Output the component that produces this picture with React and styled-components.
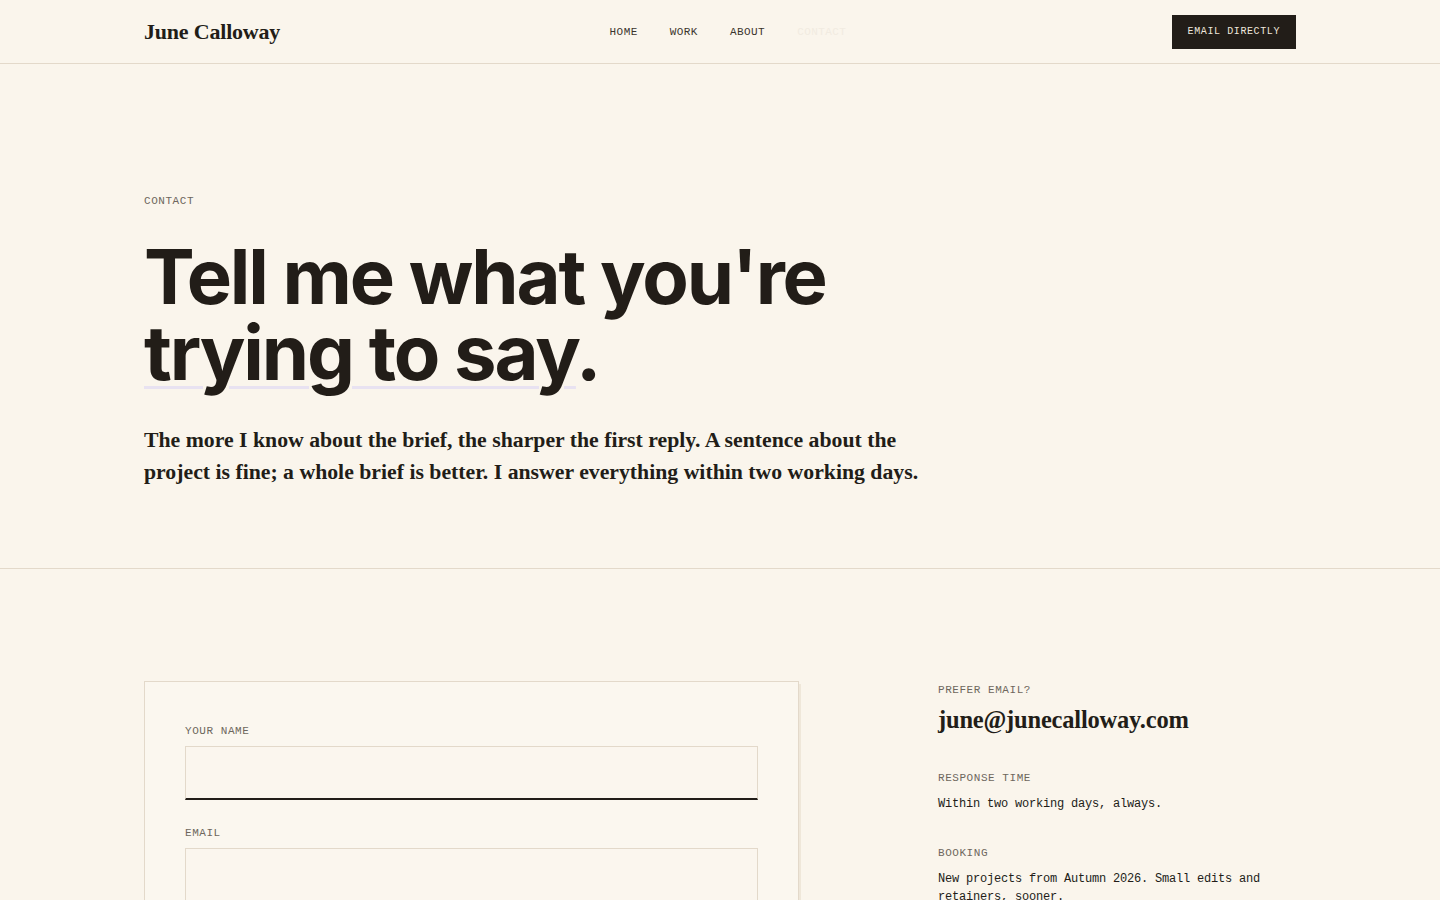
import React from "react";
import styled, { createGlobalStyle } from "styled-components";

const GlobalStyle = createGlobalStyle`
  * { box-sizing: border-box; }
  body {
    margin: 0;
    background: #faf5ec;
    color: #221d18;
    font-family: "Inter", "Noto Sans", sans-serif;
  }
`;

const mono = `"Liberation Mono", "DejaVu Sans Mono", monospace`;
const serif = `"Liberation Serif", "DejaVu Serif", serif`;

const Header = styled.header`
  height: 64px;
  border-bottom: 1px solid #e3d9ca;
`;

const Wrap = styled.div`
  width: 1152px;
  margin: 0 auto;
`;

const HeaderInner = styled(Wrap)`
  height: 100%;
  display: grid;
  grid-template-columns: 1fr auto 1fr;
  align-items: center;
`;

const Logo = styled.a`
  font-family: ${serif};
  font-weight: 700;
  font-size: 22px;
  letter-spacing: -0.2px;
  color: #221d18;
  text-decoration: none;
  padding-top: 1px;
`;

const Nav = styled.nav`
  display: flex;
  gap: 32px;
  margin-left: 16px;
`;

const NavLink = styled.a`
  font-family: ${mono};
  font-size: 11px;
  letter-spacing: 0.04em;
  text-transform: uppercase;
  color: ${(p) => (p.$active ? "#f1ebe1" : "#3a342d")};
  text-decoration: none;
`;

const HeaderCta = styled.a`
  justify-self: end;
  background: #221d18;
  color: #eee7dc;
  font-family: ${mono};
  font-size: 10px;
  letter-spacing: 0.06em;
  text-transform: uppercase;
  padding: 0 16px;
  height: 34px;
  display: flex;
  align-items: center;
  text-decoration: none;
`;

const Hero = styled.section`
  border-bottom: 1px solid #e3d9ca;
  padding: 131px 0 80px;
`;

const Eyebrow = styled.div`
  font-family: ${mono};
  font-size: 11px;
  letter-spacing: 0.05em;
  text-transform: uppercase;
  color: #6e675d;
`;

const Headline = styled.h1`
  margin: 31px 0 0;
  font-family: "Inter", "Noto Sans", sans-serif;
  font-weight: 700;
  font-size: 76px;
  line-height: 76px;
  letter-spacing: -0.028em;
  color: #221d18;
`;

const Underlined = styled.span`
  text-decoration: underline;
  text-decoration-color: #e8e2f1;
  text-decoration-thickness: 3px;
  text-underline-offset: 6px;
`;

const Lead = styled.p`
  margin: 34px 0 0;
  max-width: 800px;
  font-family: ${serif};
  font-weight: 700;
  font-size: 21.75px;
  line-height: 32px;
  color: #221d18;
`;

const ContactSection = styled.section`
  padding: 112px 0 80px;
`;

const ContactGrid = styled(Wrap)`
  display: grid;
  grid-template-columns: 655px 1fr;
  gap: 139px;
  align-items: start;
`;

const FormCard = styled.form`
  background: #fbf7ef;
  border: 1px solid #e3d9ca;
  box-shadow: 2px 3px 0 rgba(226, 216, 196, 0.45);
  padding: 43px 40px 48px;
  display: flex;
  flex-direction: column;
  gap: 27px;
`;

const Field = styled.label`
  display: flex;
  flex-direction: column;
  gap: 9px;
`;

const FieldLabel = styled.span`
  font-family: ${mono};
  font-size: 11px;
  letter-spacing: 0.05em;
  text-transform: uppercase;
  color: #6e675d;
`;

const Input = styled.input`
  height: 54px;
  background: #fbf6ee;
  border: 1px solid #e3d9ca;
  border-bottom: ${(p) => (p.$focused ? "2px solid #221d18" : "1px solid #e3d9ca")};
  font-family: ${mono};
  font-size: 13px;
  padding: 0 14px;
  outline: none;
  color: #221d18;
`;

const Aside = styled.aside`
  display: flex;
  flex-direction: column;
  gap: 34px;
  padding-top: 3px;
`;

const InfoBlock = styled.div`
  display: flex;
  flex-direction: column;
  gap: ${(p) => (p.$big ? "10px" : "11px")};
  padding-bottom: ${(p) => (p.$big ? "4px" : "0")};
`;

const EmailLink = styled.a`
  font-family: ${serif};
  font-weight: 700;
  font-size: 24.5px;
  letter-spacing: -0.2px;
  color: #221d18;
  text-decoration: none;
`;

const InfoText = styled.p`
  margin: 0;
  font-family: ${mono};
  font-size: 12px;
  line-height: 18px;
  letter-spacing: -0.2px;
  color: #221d18;
  max-width: 340px;
`;

export default function App() {
  const nav = ["Home", "Work", "About", "Contact"];
  const info = [
    { label: "Response time", text: "Within two working days, always." },
    {
      label: "Booking",
      text: "New projects from Autumn 2026. Small edits and retainers, sooner.",
    },
  ];

  return (
    <>
      <GlobalStyle />
      <Header>
        <HeaderInner>
          <Logo href="#">June Calloway</Logo>
          <Nav>
            {nav.map((item) => (
              <NavLink key={item} href="#" $active={item === "Contact"}>
                {item}
              </NavLink>
            ))}
          </Nav>
          <HeaderCta href="#">Email directly</HeaderCta>
        </HeaderInner>
      </Header>

      <Hero>
        <Wrap>
          <Eyebrow>Contact</Eyebrow>
          <Headline>
            Tell me what you're
            <br />
            <Underlined>trying to say</Underlined>.
          </Headline>
          <Lead>
            The more I know about the brief, the sharper the first reply. A
            sentence about the project is fine; a whole brief is better. I
            answer everything within two working days.
          </Lead>
        </Wrap>
      </Hero>

      <ContactSection>
        <ContactGrid>
          <FormCard onSubmit={(e) => e.preventDefault()}>
            <Field>
              <FieldLabel>Your name</FieldLabel>
              <Input type="text" $focused />
            </Field>
            <Field>
              <FieldLabel>Email</FieldLabel>
              <Input type="email" />
            </Field>
            <Field>
              <FieldLabel>What are you working on?</FieldLabel>
              <Input type="text" />
            </Field>
          </FormCard>

          <Aside>
            <InfoBlock $big>
              <FieldLabel>Prefer email?</FieldLabel>
              <EmailLink href="#">june@junecalloway.com</EmailLink>
            </InfoBlock>
            {info.map((item) => (
              <InfoBlock key={item.label}>
                <FieldLabel>{item.label}</FieldLabel>
                <InfoText>{item.text}</InfoText>
              </InfoBlock>
            ))}
          </Aside>
        </ContactGrid>
      </ContactSection>
    </>
  );
}
